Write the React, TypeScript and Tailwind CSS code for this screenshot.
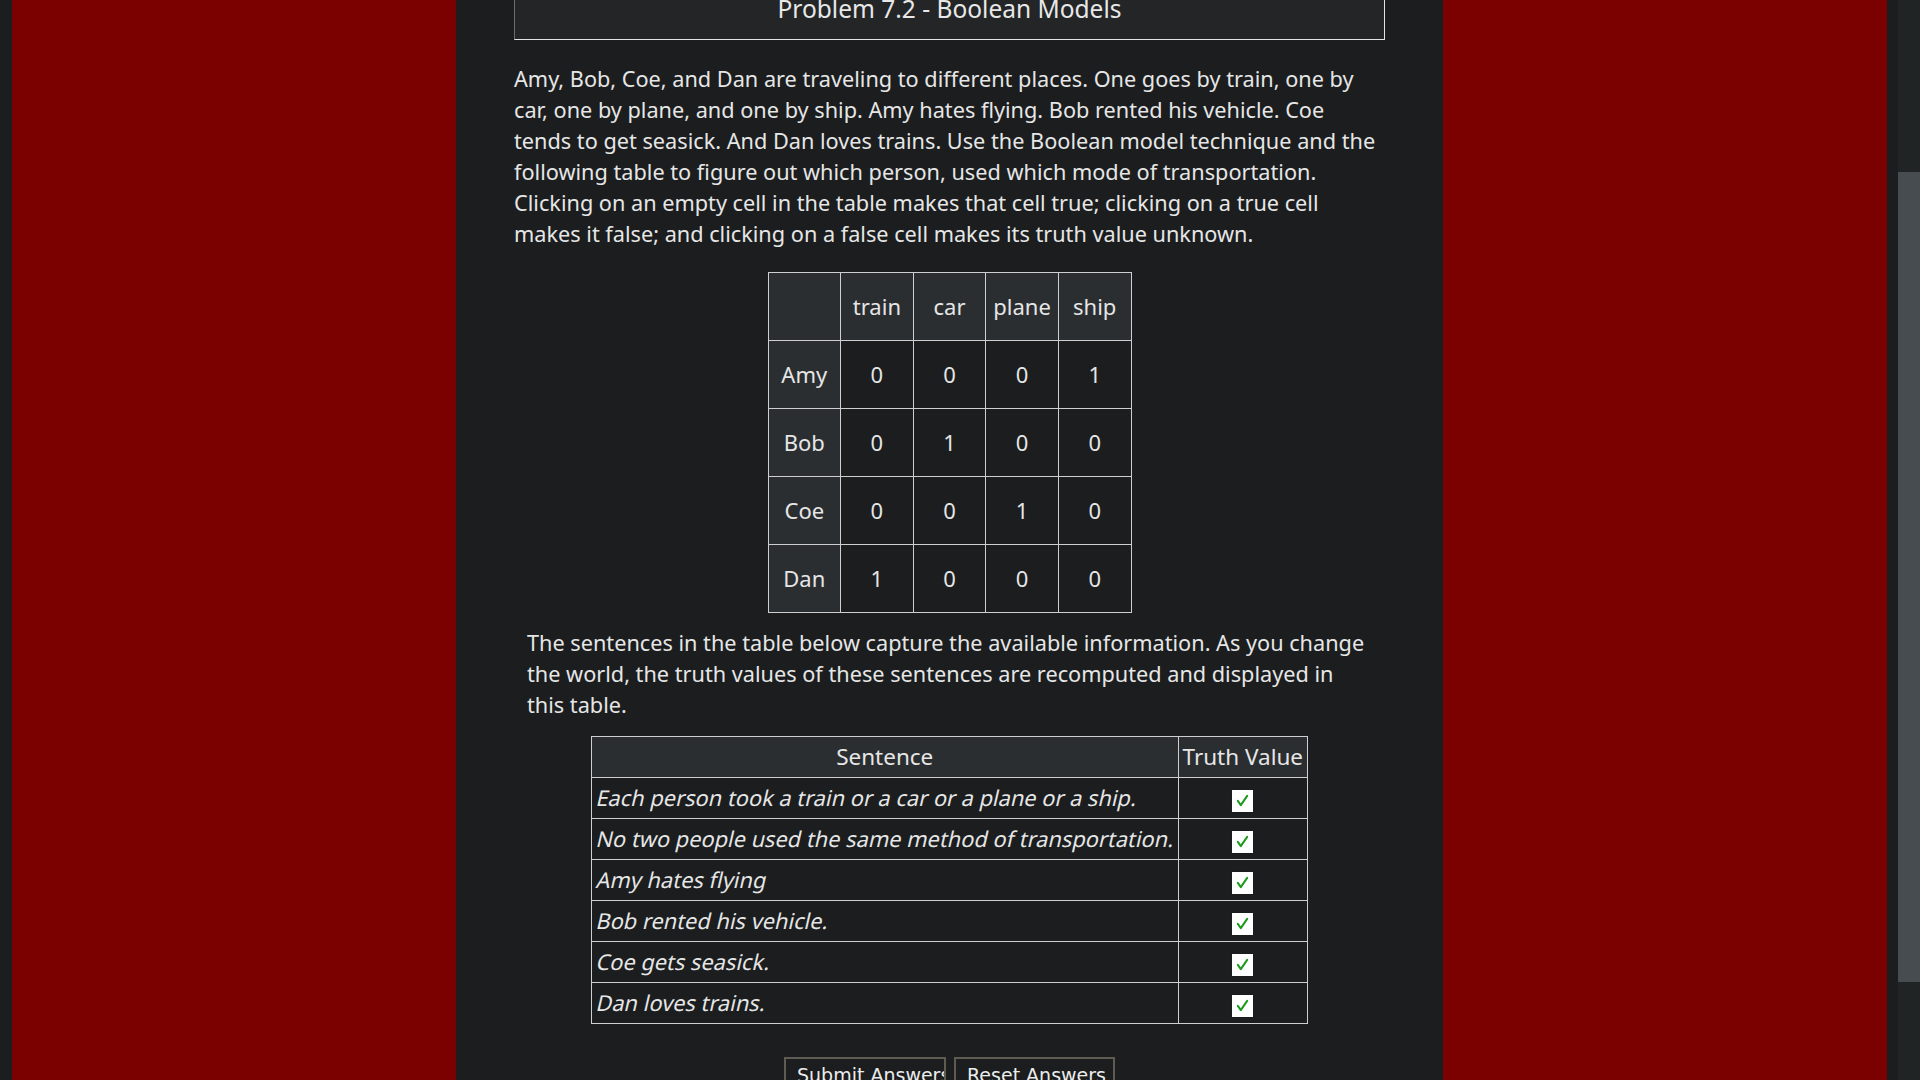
import React from 'react';

const people = ['Amy', 'Bob', 'Coe', 'Dan'];
const modes = ['train', 'car', 'plane', 'ship'];
const grid = [
  [0, 0, 0, 1],
  [0, 1, 0, 0],
  [0, 0, 1, 0],
  [1, 0, 0, 0],
];

const sentences = [
  'Each person took a train or a car or a plane or a ship.',
  'No two people used the same method of transportation.',
  'Amy hates flying',
  'Bob rented his vehicle.',
  'Coe gets seasick.',
  'Dan loves trains.',
];

const Check = () => (
  <span className="inline-flex h-[22px] w-[21px] items-center justify-center bg-white shadow-[0_0_1px_rgba(0,0,0,0.4)] align-middle">
    <svg viewBox="0 0 20 20" className="h-[17px] w-[17px]">
      <path d="M4.5 10.5 L8 15.5 L15.5 4.5" fill="none" stroke="#1f9a1f" strokeWidth="2.4" strokeLinecap="round" strokeLinejoin="round" />
    </svg>
  </span>
);

const App: React.FC = () => {
  return (
    <div
      className="flex h-screen w-full overflow-hidden bg-[#1b1d1f] text-[#e6e6e6]"
      style={{ fontFamily: '"Noto Sans", "Open Sans", sans-serif' }}
    >
      <div className="flex flex-1 justify-center bg-[#7b0000] ml-[12px] mr-[11px]">
        <div className="w-[987px] shrink-0 bg-[#1b1d1f] px-[58px] -mt-[22px]">
          {/* title */}
          <div className="border border-t-[#6d6d6d] border-l-[#6d6d6d] border-b-[#e4e4e4] border-r-[#e4e4e4] bg-[#232527] pt-[14px] pb-[14px] text-center text-[24.5px] leading-[32px] text-[#e8e8e8]">
            Problem 7.2 - Boolean Models
          </div>

          <p className="mt-[23px] text-[21.7px] leading-[31px]">
            Amy, Bob, Coe, and Dan are traveling to different places. One goes by train, one by car, one by plane,
            and one by ship. Amy hates flying. Bob rented his vehicle. Coe tends to get seasick. And Dan loves trains.
            Use the Boolean model technique and the following table to figure out which person, used which mode of
            transportation. Clicking on an empty cell in the table makes that cell true; clicking on a true cell makes
            it false; and clicking on a false cell makes its truth value unknown.
          </p>

          {/* world table */}
          <div className="mt-[23px] flex justify-center">
            <table className="w-[364px] table-fixed border-collapse border border-[#8a8a8a] text-[22px]">
              <thead>
                <tr className="h-[68px]">
                  <th className="border border-[#cfcfcf] bg-[#2b2e31]"></th>
                  {modes.map((m) => (
                    <th key={m} className="border border-[#cfcfcf] bg-[#2b2e31] font-normal">
                      {m}
                    </th>
                  ))}
                </tr>
              </thead>
              <tbody>
                {people.map((p, i) => (
                  <tr key={p} className="h-[68px]">
                    <th className="border border-[#cfcfcf] bg-[#2b2e31] font-normal">{p}</th>
                    {grid[i].map((v, j) => (
                      <td key={j} className="border border-[#cfcfcf] bg-[#1b1d1f] text-center">
                        {v}
                      </td>
                    ))}
                  </tr>
                ))}
              </tbody>
            </table>
          </div>

          <p className="mt-[14px] px-[13px] text-[21.7px] leading-[31px]">
            The sentences in the table below capture the available information. As you change the world, the truth
            values of these sentences are recomputed and displayed in this table.
          </p>

          {/* sentence table */}
          <div className="mt-[16px] flex justify-center">
            <table className="border-collapse border border-[#8a8a8a] text-[22px]">
              <thead>
                <tr className="h-[41px]">
                  <th className="border border-[#cfcfcf] bg-[#2b2e31] px-[4px] text-[22.5px] font-normal">Sentence</th>
                  <th className="border border-[#cfcfcf] bg-[#2b2e31] px-[4px] text-[22.5px] font-normal">Truth Value</th>
                </tr>
              </thead>
              <tbody>
                {sentences.map((s) => (
                  <tr key={s} className="h-[41px]">
                    <td className="border border-[#cfcfcf] pl-[5px] pr-[3px] whitespace-nowrap text-[21.8px]">
                      <span className="inline-block [transform:skewX(-13deg)]">{s}</span>
                    </td>
                    <td className="border border-[#cfcfcf] text-center">
                      <Check />
                    </td>
                  </tr>
                ))}
              </tbody>
            </table>
          </div>

          {/* buttons */}
          <div className="mt-[33px] flex justify-center gap-[8px]" style={{ fontFamily: '"DejaVu Sans", sans-serif' }}>
            <button className="h-[36px] w-[162px] overflow-hidden whitespace-nowrap border-2 border-[#5f5a52] bg-[#1b1d1f] pl-[11px] text-left text-[19px] text-[#ececec]">
              Submit Answers
            </button>
            <button className="h-[36px] w-[161px] overflow-hidden whitespace-nowrap border-2 border-[#5f5a52] bg-[#1b1d1f] pl-[11px] text-left text-[19px] text-[#ececec]">
              Reset Answers
            </button>
          </div>
        </div>
      </div>

      {/* scrollbar */}
      <div className="flex w-[22px] shrink-0 flex-col bg-[#202425]">
        <div className="h-[172px]" />
        <div className="h-[810px] bg-[#464c4f]" />
      </div>
    </div>
  );
};

export default App;
